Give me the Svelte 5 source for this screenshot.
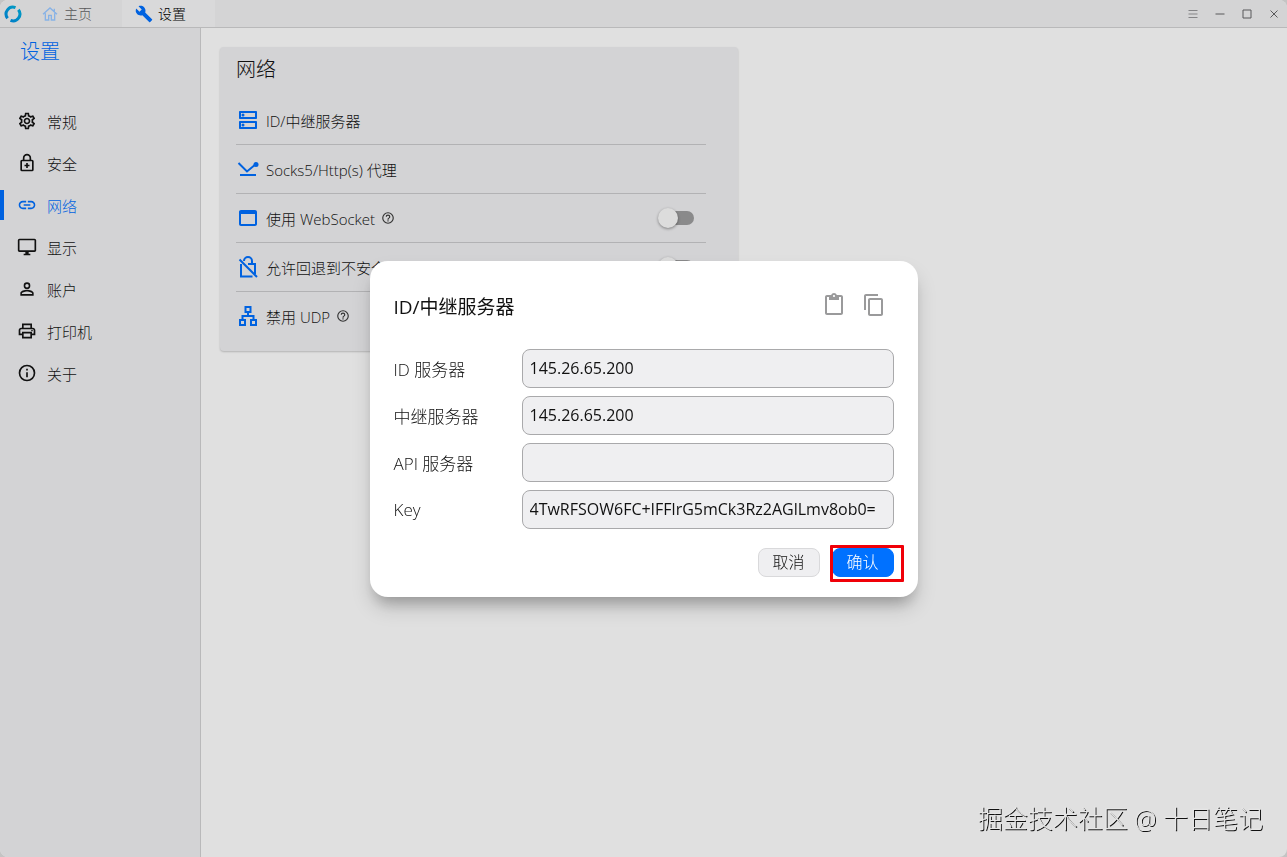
<script>
	const navItems = [
		{ icon: 'gear', label: '常规' },
		{ icon: 'lock', label: '安全' },
		{ icon: 'link', label: '网络' },
		{ icon: 'monitor', label: '显示' },
		{ icon: 'person', label: '账户' },
		{ icon: 'printer', label: '打印机' },
		{ icon: 'info', label: '关于' }
	];

	let active = $state('网络');

	let options = $state([
		{ id: 'websocket', icon: 'window', label: '使用 WebSocket', help: true, on: false },
		{ id: 'tls', icon: 'unlock', label: '允许回退到不安全的连接', help: true, on: false },
		{ id: 'udp', icon: 'lan', label: '禁用 UDP', help: true, on: false }
	]);

	let fields = $state([
		{ id: 'id-server', label: 'ID 服务器', value: '145.26.65.200' },
		{ id: 'relay-server', label: '中继服务器', value: '145.26.65.200' },
		{ id: 'api-server', label: 'API 服务器', value: '' },
		{ id: 'key', label: 'Key', value: '4TwRFSOW6FC+IFFlrG5mCk3Rz2AGlLmv8ob0=' }
	]);
</script>

{#snippet icon(name)}
	<svg class="icon" viewBox="0 0 24 24" aria-hidden="true">
		{#if name === 'gear'}
			<path d="M19.43 12.98c.04-.32.07-.64.07-.98 0-.34-.03-.66-.07-.98l2.11-1.65c.19-.15.24-.42.12-.64l-2-3.46c-.09-.16-.26-.25-.44-.25-.06 0-.12.01-.17.03l-2.49 1c-.52-.4-1.08-.73-1.69-.98l-.38-2.65C14.46 2.18 14.25 2 14 2h-4c-.25 0-.46.18-.49.42l-.38 2.65c-.61.25-1.17.59-1.69.98l-2.49-1c-.06-.02-.12-.03-.18-.03-.17 0-.34.09-.43.25l-2 3.46c-.13.22-.07.49.12.64l2.11 1.65c-.04.32-.07.65-.07.98 0 .33.03.66.07.98l-2.11 1.65c-.19.15-.24.42-.12.64l2 3.46c.09.16.26.25.44.25.06 0 .12-.01.17-.03l2.49-1c.52.4 1.08.73 1.69.98l.38 2.65c.03.24.24.42.49.42h4c.25 0 .46-.18.49-.42l.38-2.65c.61-.25 1.17-.59 1.69-.98l2.49 1c.06.02.12.03.18.03.17 0 .34-.09.43-.25l2-3.46c.12-.22.07-.49-.12-.64l-2.11-1.65zm-1.98-1.71c.04.31.05.52.05.73 0 .21-.02.43-.05.73l-.14 1.13.89.7 1.08.84-.7 1.21-1.27-.51-1.04-.42-.9.68c-.43.32-.84.56-1.25.73l-1.06.43-.16 1.13-.2 1.35h-1.4l-.19-1.35-.16-1.13-1.06-.43c-.43-.18-.83-.41-1.23-.71l-.91-.7-1.06.43-1.27.51-.7-1.21 1.08-.84.89-.7-.14-1.13c-.03-.31-.05-.54-.05-.74s.02-.43.05-.73l.14-1.13-.89-.7-1.08-.84.7-1.21 1.27.51 1.04.42.9-.68c.43-.32.84-.56 1.25-.73l1.06-.43.16-1.13.2-1.35h1.39l.19 1.35.16 1.13 1.06.43c.43.18.83.41 1.23.71l.91.7 1.06-.43 1.27-.51.7 1.21-1.07.85-.89.7.14 1.13zM12 8c-2.21 0-4 1.79-4 4s1.79 4 4 4 4-1.79 4-4-1.79-4-4-4zm0 6c-1.1 0-2-.9-2-2s.9-2 2-2 2 .9 2 2-.9 2-2 2z" />
		{:else if name === 'lock'}
			<g class="line">
				<rect x="5" y="9" width="14" height="12" rx="1" />
				<path d="M8 9V6a4 4 0 0 1 8 0v3M12 12v6M9 15h6" />
			</g>
		{:else if name === 'link'}
			<path d="M3.900 12c0-1.710 1.390-3.100 3.100-3.100h4V7H7c-2.760 0-5 2.240-5 5s2.240 5 5 5h4v-1.900H7c-1.710 0-3.100-1.390-3.100-3.100zM8 13h8v-2H8v2zm9-6h-4v1.900h4c1.710 0 3.100 1.390 3.100 3.100s-1.390 3.100-3.100 3.100h-4V17h4c2.760 0 5-2.240 5-5s-2.240-5-5-5z" />
		{:else if name === 'monitor'}
			<path d="M21 2H3c-1.100 0-2 .9-2 2v12c0 1.100.9 2 2 2h7v2H8v2h8v-2h-2v-2h7c1.100 0 2-.9 2-2V4c0-1.100-.9-2-2-2zm0 14H3V4h18v12z" />
		{:else if name === 'person'}
			<path d="M12 5.900a2.100 2.100 0 1 1 0 4.200 2.100 2.100 0 0 1 0-4.200m0 9c2.970 0 6.100 1.460 6.100 2.100v1.100H5.900V17c0-.64 3.130-2.100 6.100-2.100M12 4a4 4 0 1 0 0 8 4 4 0 0 0 0-8zm0 9c-2.670 0-8 1.340-8 4v3h16v-3c0-2.660-5.330-4-8-4z" />
		{:else if name === 'printer'}
			<path d="M19 8h-1V3H6v5H5c-1.660 0-3 1.340-3 3v6h4v4h12v-4h4v-6c0-1.660-1.340-3-3-3zM8 5h8v3H8V5zm8 14H8v-4h8v4zm2-4v-2H6v2H4v-4c0-.55.45-1 1-1h14c.55 0 1 .45 1 1v4h-2z" />
			<circle cx="18" cy="11.500" r="1" />
		{:else if name === 'info'}
			<path d="M11 7h2v2h-2zM11 11h2v6h-2zM12 2a10 10 0 1 0 0 20 10 10 0 0 0 0-20zm0 18a8 8 0 1 1 0-16 8 8 0 0 1 0 16z" />
		{:else if name === 'server'}
			<path d="M19 15v4H5v-4h14m1-2H4c-.55 0-1 .45-1 1v6c0 .55.45 1 1 1h16c.55 0 1-.45 1-1v-6c0-.55-.45-1-1-1zM7 18.500a1.500 1.500 0 1 1 0-3 1.500 1.500 0 0 1 0 3zM19 5v4H5V5h14m1-2H4c-.55 0-1 .45-1 1v6c0 .55.45 1 1 1h16c.55 0 1-.45 1-1V4c0-.55-.45-1-1-1zM7 8.500a1.500 1.500 0 1 1 0-3 1.500 1.500 0 0 1 0 3z" />
		{:else if name === 'proxy'}
			<path class="line" d="M2.500 6l8.500 8.500 9-7.500M4 18h16" />
			<circle cx="20" cy="7.500" r="2.500" />
		{:else if name === 'window'}
			<path d="M19 4H5c-1.110 0-2 .9-2 2v12c0 1.100.89 2 2 2h14c1.100 0 2-.9 2-2V6c0-1.100-.9-2-2-2zm0 14H5V8h14v10z" />
		{:else if name === 'unlock'}
			<path class="line" d="M8 6a4 4 0 0 1 8 0v3M12 9h7v10M16.500 21.500H5V9M3.500 4.500l17.500 17.500" />
		{:else if name === 'lan'}
			<g class="line">
				<path d="M9.500 3h5v5h-5zM4 16h5v5H4zM15 16h5v5h-5zM12 8v4M6.500 16v-4h11v4" />
			</g>
		{:else if name === 'help'}
			<path d="M11 18h2v-2h-2v2zm1-16a10 10 0 1 0 0 20 10 10 0 0 0 0-20zm0 18a8 8 0 1 1 0-16 8 8 0 0 1 0 16zm0-14a4 4 0 0 0-4 4h2a2 2 0 1 1 4 0c0 2-3 1.750-3 5h2c0-2.250 3-2.500 3-5a4 4 0 0 0-4-4z" />
		{:else if name === 'paste'}
			<path d="M19 2h-4.180C14.400.84 13.300 0 12 0S9.600.84 9.180 2H5c-1.100 0-2 .9-2 2v16c0 1.100.9 2 2 2h14c1.100 0 2-.9 2-2V4c0-1.100-.9-2-2-2zm-7 0c.55 0 1 .45 1 1s-.45 1-1 1-1-.45-1-1 .45-1 1-1zm7 18H5V4h2v3h10V4h2v16z" />
		{:else if name === 'copy'}
			<path d="M16 1H4c-1.100 0-2 .9-2 2v14h2V3h12V1zm3 4H8c-1.100 0-2 .9-2 2v14c0 1.100.9 2 2 2h11c1.100 0 2-.9 2-2V7c0-1.100-.9-2-2-2zm0 16H8V7h11v14z" />
		{:else if name === 'home'}
			<path class="line" d="M1.500 12.500L12 3l10.500 9.500M18.500 4v5M5 11v10h5v-7h4v7h5V11" />
		{:else if name === 'wrench'}
			<path d="M22.700 19l-9.100-9.100c.9-2.300.4-5-1.500-6.900-2-2-5-2.400-7.400-1.300L9 6 6 9 1.600 4.700C.4 7.100.9 10.100 2.900 12.100c1.900 1.900 4.600 2.400 6.900 1.500l9.100 9.100c.4.4 1 .4 1.400 0l2.300-2.300c.5-.4.5-1.100.1-1.400z" />
		{:else if name === 'menu'}
			<path class="thin" d="M3 5h18M3 12h18M3 19h18" />
		{:else if name === 'minimize'}
			<path class="thin" d="M3 12h18" />
		{:else if name === 'maximize'}
			<path class="thin" d="M4 4h16v16H4z" />
		{:else if name === 'close'}
			<path class="thin" d="M5 5l14 14M19 5L5 19" />
		{/if}
	</svg>
{/snippet}

<div class="window">
	<header class="titlebar">
		<svg class="logo" viewBox="0 0 20 20" aria-hidden="true">
			<defs>
				<linearGradient id="ring" x1="0" y1="1" x2="1" y2="0">
					<stop offset="0" stop-color="#0080c8" />
					<stop offset="1" stop-color="#0098c4" />
				</linearGradient>
			</defs>
			<g fill="none" stroke="url(#ring)" stroke-width="3">
				<path d="M12.500 3.700A6.800 6.800 0 0 0 4.600 14.200" />
				<path d="M7.500 16.300A6.800 6.800 0 0 0 15.400 5.800" />
			</g>
		</svg>
		<nav class="tabs">
			<a class="tab" href="#home"><span class="home">{@render icon('home')}</span>主页</a>
			<a class="tab current" href="#settings"><span class="wrench">{@render icon('wrench')}</span>设置</a>
		</nav>
		<div class="controls">
			<button aria-label="菜单">{@render icon('menu')}</button>
			<button class="dark" aria-label="最小化">{@render icon('minimize')}</button>
			<button class="dark" aria-label="最大化">{@render icon('maximize')}</button>
			<button class="dark" aria-label="关闭">{@render icon('close')}</button>
		</div>
	</header>

	<div class="body">
		<aside class="sidebar">
			<h1>设置</h1>
			<nav>
				{#each navItems as item}
					<button
						class="nav-item"
						class:active={active === item.label}
						onclick={() => (active = item.label)}
					>
						{@render icon(item.icon)}
						{item.label}
					</button>
				{/each}
			</nav>
		</aside>

		<main class="content">
			<section class="card">
				<h2>网络</h2>
				<div class="rows">
					<button class="row">{@render icon('server')}ID/中继服务器</button>
					<button class="row">{@render icon('proxy')}Socks5/Http(s) 代理</button>
					{#each options as option}
						<label class="row" for={option.id}>
							{@render icon(option.icon)}
							{option.label}
							{#if option.help}
								<span class="help">{@render icon('help')}</span>
							{/if}
							<input id={option.id} class="switch" type="checkbox" bind:checked={option.on} />
						</label>
					{/each}
				</div>
			</section>
		</main>
	</div>
</div>

<div class="overlay">
	<div class="dialog" role="dialog" aria-labelledby="dialog-title">
		<div class="dialog-head">
			<h2 id="dialog-title">ID/中继服务器</h2>
			<div class="tools">
				<button aria-label="粘贴">{@render icon('paste')}</button>
				<button aria-label="复制">{@render icon('copy')}</button>
			</div>
		</div>
		<div class="fields">
			{#each fields as field}
				<div class="field">
					<label for={field.id}>{field.label}</label>
					<input id={field.id} type="text" bind:value={field.value} />
				</div>
			{/each}
		</div>
		<div class="actions">
			<button class="btn">取消</button>
			<div class="marked"><button class="btn primary">确认</button></div>
		</div>
	</div>
</div>

<div class="watermark">掘金技术社区 @ 十日笔记</div>

<style>
	:global(body) {
		background-color: #c4c4c4;
		font-family: 'Open Sans', 'Noto Sans CJK SC', sans-serif;
		font-weight: 300;
		color: #111;
	}
	button,
	input {
		font: inherit;
		color: inherit;
	}
	button {
		background: none;
		border: none;
		padding: 0;
		cursor: pointer;
	}
	h1,
	h2 {
		margin: 0;
		font-weight: 300;
	}
	.icon {
		display: block;
		flex: none;
		width: 24px;
		height: 24px;
		fill: currentColor;
	}
	.line,
	.thin {
		fill: none;
		stroke: currentColor;
		stroke-width: 2;
	}
	.window {
		display: flex;
		flex-direction: column;
		min-height: 100vh;
		background-color: #e0e0e0;
		border-radius: 8px;
		overflow: hidden;
	}
	.titlebar {
		display: flex;
		align-items: stretch;
		height: 27px;
		background-color: #d4d4d5;
		border-bottom: 1px solid #b9b9ba;
	}
	.logo {
		width: 20px;
		height: 20px;
		margin: 4px 3px;
	}
	.tabs {
		display: flex;
	}
	.tab {
		display: flex;
		align-items: center;
		width: 80px;
		padding: 0 0 0 16px;
		gap: 6px;
		font-size: 14px;
		line-height: 24px;
		color: #58585a;
		text-decoration: none;
	}
	.tab.current {
		padding-left: 13px;
		gap: 5px;
		background-color: #d9d9da;
		color: #000;
	}
	.home .icon {
		width: 16px;
		height: 16px;
		color: #87b2e6;
	}
	.wrench .icon {
		width: 18px;
		height: 18px;
		color: #0062e0;
	}
	.controls {
		display: flex;
		align-items: center;
		margin-left: auto;
		color: #858587;
	}
	.controls button {
		display: grid;
		place-items: center;
		width: 27px;
		height: 27px;
	}
	.controls .dark {
		color: #58585a;
	}
	.controls .icon {
		width: 12px;
		height: 12px;
	}
	.body {
		display: flex;
		flex: 1;
	}
	.sidebar {
		width: 200px;
		background-color: #d3d3d5;
		border-right: 1px solid #b9b9ba;
	}
	.sidebar h1 {
		padding: 8px 20px 38px;
		font-size: 20px;
		line-height: 32px;
		color: #0062e0;
	}
	.nav-item {
		display: flex;
		align-items: center;
		gap: 10px;
		width: 100%;
		height: 30px;
		margin: 0 0 12px;
		padding-left: 13px;
		border-left: 4px solid transparent;
		font-size: 15px;
	}
	.nav-item.active {
		border-left-color: #0062e0;
		color: #0062e0;
	}
	.nav-item .icon {
		width: 20px;
		height: 20px;
	}
	.content {
		flex: 1;
		padding: 19px;
	}
	.card {
		max-width: 470px;
		padding: 8px 32px 10px 16px;
		background-color: #d3d3d5;
		border-radius: 4px;
		box-shadow: 0 1px 2px #00000033;
	}
	.card h2 {
		font-size: 20px;
		line-height: 30px;
		margin-bottom: 11px;
	}
	.row {
		display: flex;
		align-items: center;
		width: 100%;
		height: 49px;
		gap: 6px;
		padding-right: 12px;
		box-sizing: border-box;
		font-size: 15px;
		border-bottom: 1px solid #b2b2b4;
	}
	.row:last-child {
		border-bottom-color: transparent;
	}
	.row > :global(.icon) {
		color: #0062e0;
	}
	.help .icon {
		width: 14px;
		height: 14px;
		color: #333;
	}
	.switch {
		appearance: none;
		display: flex;
		align-items: center;
		width: 34px;
		height: 14px;
		margin: 0 0 0 auto;
		border-radius: 7px;
		background-color: #8a8a8b;
	}
	.switch::before {
		content: '';
		width: 20px;
		height: 20px;
		margin-left: -2px;
		border-radius: 50%;
		background-color: #dcdcdc;
		box-shadow: 0 1px 3px #00000066;
	}
	.switch:checked::before {
		margin-left: 16px;
	}
	.overlay {
		position: fixed;
		inset: 0;
		display: grid;
		place-items: center;
	}
	.dialog {
		width: min(548px, 90vw);
		box-sizing: border-box;
		padding: 24px 24px 20px;
		background-color: #fff;
		border-radius: 18px;
		box-shadow:
			0 11px 15px -7px #00000044,
			0 12px 20px #00000022;
	}
	.dialog-head {
		display: flex;
		justify-content: space-between;
		height: 44px;
		margin-bottom: 20px;
	}
	.dialog-head h2 {
		font-size: 19px;
		line-height: 44px;
		font-weight: 400;
	}
	.tools {
		display: flex;
		align-items: center;
		height: 40px;
		gap: 16px;
		padding-right: 8px;
		color: #9a9a9b;
	}
	.fields {
		display: grid;
		gap: 8px;
	}
	.field {
		display: grid;
		grid-template-columns: 128px 1fr;
		align-items: center;
		font-size: 17px;
	}
	.field input {
		width: 100%;
		height: 39px;
		min-width: 0;
		box-sizing: border-box;
		padding: 0 7px;
		font-size: 16px;
		font-weight: 400;
		background-color: #efeff1;
		border: 1px solid #a9a9ab;
		border-radius: 8px;
	}
	.actions {
		display: flex;
		justify-content: flex-end;
		gap: 12px;
		margin-top: 19px;
	}
	.btn {
		display: block;
		width: 62px;
		height: 29px;
		border: 1px solid #d9d9db;
		border-radius: 8px;
		background-color: #efeff1;
		font-size: 16px;
		line-height: 26px;
	}
	.btn.primary {
		border-color: #0071ff;
		background-color: #0071ff;
		color: #fff;
	}
	.marked {
		position: relative;
	}
	.marked::after {
		content: '';
		position: absolute;
		inset: -3px -10px -5px -2px;
		border: 3px solid #f00008;
		border-radius: 1px;
		pointer-events: none;
	}
	.watermark {
		position: fixed;
		right: 24px;
		bottom: 20px;
		font-size: 25px;
		line-height: 38px;
		color: #e6e6e6;
		text-shadow: 1px 1px 0 #111;
	}
</style>
